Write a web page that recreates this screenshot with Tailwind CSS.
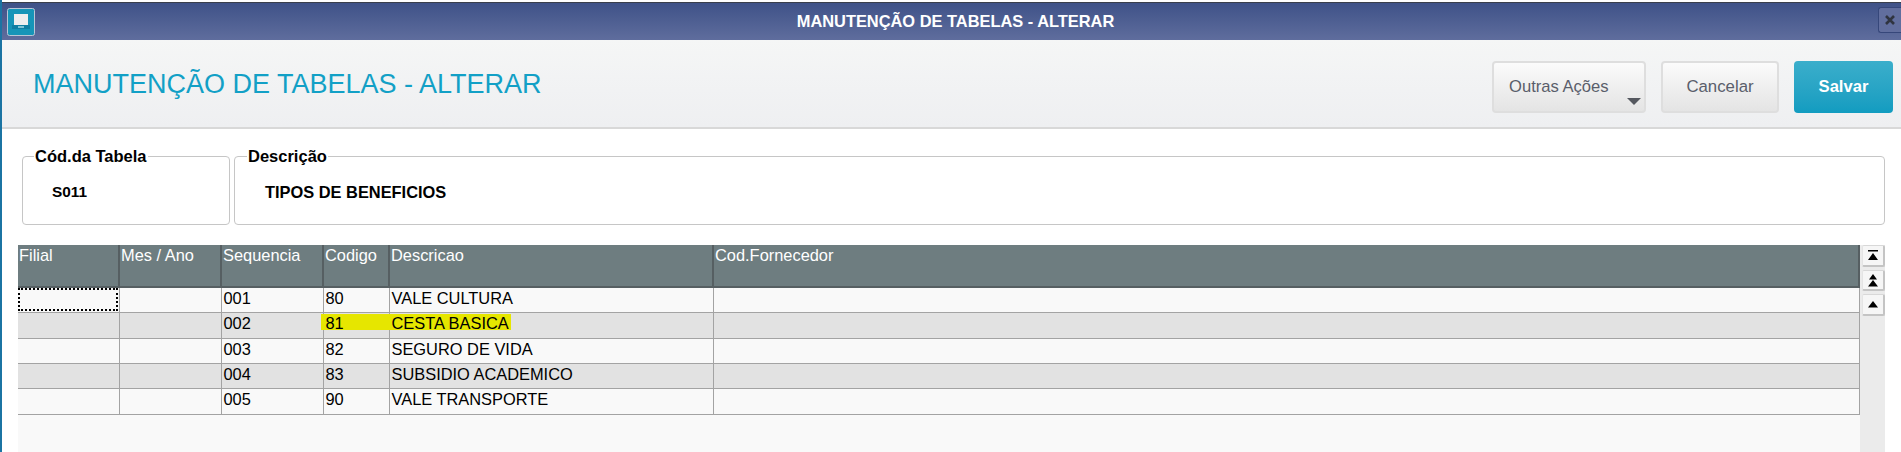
<!DOCTYPE html>
<html lang="pt-BR">
<head>
    <meta charset="UTF-8">
    <title>Manutenção de Tabelas - Alterar</title>
    <script src="https://cdn.jsdelivr.net/npm/@tailwindcss/browser@4"></script>
</head>
<body class="h-[452px] overflow-hidden bg-white font-['Liberation_Sans',Arial,sans-serif]">
<div class="h-[452px] flex flex-col border-l-[2px] border-[#1b74a3]">

    <!-- Title bar -->
    <div class="h-[40px] shrink-0 pt-[2px] bg-white">
        <div class="relative h-[38px] flex items-center justify-center border-t border-[#3a3f4c] bg-gradient-to-b from-[#3f5288] to-[#5f6d9d]">
            <svg class="absolute left-[5px] top-[5px]" width="28" height="28" viewBox="0 0 28 28">
                <rect x="0.5" y="0.5" width="27" height="27" rx="2" fill="#1695b8" stroke="#b9c6d6"/>
                <rect x="7" y="6" width="14" height="11" fill="#eeeeee"/>
                <rect x="5" y="17" width="18" height="4" fill="#0f7fa3"/>
                <rect x="11" y="18" width="6" height="2" fill="#7cc3d6"/>
            </svg>
            <span class="ml-[8px] text-[16.4px] font-bold text-white">MANUTENÇÃO DE TABELAS - ALTERAR</span>
            <div class="absolute right-0 top-[4px] w-[23px] h-[26px] flex items-center justify-center rounded-l-[3px] border border-r-0 border-[#36477a] bg-[#616e9e]">
                <svg width="10" height="10" viewBox="0 0 10 10"><path d="M1 1 L9 9 M9 1 L1 9" stroke="#2f3440" stroke-width="2.6"/></svg>
            </div>
        </div>
    </div>

    <!-- Page header -->
    <div class="h-[89px] shrink-0 flex items-start justify-between pl-[31px] pr-[8px] border-b-2 border-[#d8d8d8] bg-gradient-to-b from-[#f5f6f6] to-[#eeeff1]">
        <h1 class="mt-[29px] text-[27px] leading-[30px] text-[#12a0c6]">MANUTENÇÃO DE TABELAS - ALTERAR</h1>
        <div class="mt-[21px] flex gap-[15px]">
            <button class="relative w-[154px] h-[52px] pl-[15px] text-left text-[16.6px] text-[#5a5e6b] rounded-[4px] border-2 border-[#dedede] bg-gradient-to-b from-[#fbfbfb] to-[#e4e4e4]">
                Outras Ações
                <span class="absolute right-[3px] bottom-[6px] w-0 h-0 border-x-[7px] border-x-transparent border-t-[7px] border-t-[#55585f]"></span>
            </button>
            <button class="w-[118px] h-[52px] text-[16.8px] text-[#5a5e6b] rounded-[4px] border-2 border-[#dedede] bg-gradient-to-b from-[#fbfbfb] to-[#e4e4e4]">Cancelar</button>
            <button class="w-[99px] h-[52px] text-[16.6px] font-bold text-white rounded-[4px] bg-gradient-to-b from-[#3aaecb] to-[#119cc0]">Salvar</button>
        </div>
    </div>

    <!-- Fields -->
    <div class="shrink-0 flex gap-[4px] pl-[20px] pr-[16px] pt-[18px]">
        <fieldset class="w-[208px] h-[78px] pl-[29px] border border-[#c6c6c6] rounded-[4px]">
            <legend class="ml-[-18px] px-[1px] text-[16.5px] leading-[18px] font-bold text-black">Cód.da Tabela</legend>
            <p class="mt-[17px] text-[15.4px] leading-[20px] font-bold text-black">S011</p>
        </fieldset>
        <fieldset class="flex-1 h-[78px] pl-[30px] border border-[#c6c6c6] rounded-[4px]">
            <legend class="ml-[-18px] px-[1px] text-[16.5px] leading-[18px] font-bold text-black">Descrição</legend>
            <p class="mt-[17px] text-[16.4px] leading-[20px] font-bold text-black">TIPOS DE BENEFICIOS</p>
        </fieldset>
    </div>

    <!-- Grid -->
    <div class="flex-1 flex pl-[16px] pt-[20px] pr-[16px] min-h-0">
        <div class="w-[1842px] bg-[#f9f9f9]">
            <table class="w-full table-fixed border-collapse text-[16.4px] leading-[21px] text-black">
                <colgroup>
                    <col class="w-[101px]"><col class="w-[102px]"><col class="w-[102px]"><col class="w-[66px]"><col class="w-[324px]"><col>
                </colgroup>
                <thead>
                    <tr class="h-[42px] bg-[#6e7d80] text-left align-top text-[16.4px] leading-[20px] text-white">
                        <th class="pl-[1px] font-normal border-r-2 border-b-2 border-[#565f62]">Filial</th>
                        <th class="pl-[1px] font-normal border-r-2 border-b-2 border-[#565f62]">Mes / Ano</th>
                        <th class="pl-[1px] font-normal border-r-2 border-b-2 border-[#565f62]">Sequencia</th>
                        <th class="pl-[1px] font-normal border-r-2 border-b-2 border-[#565f62]">Codigo</th>
                        <th class="pl-[1px] font-normal border-r-2 border-b-2 border-[#565f62]">Descricao</th>
                        <th class="pl-[1px] font-normal border-r-2 border-b-2 border-[#565f62]">Cod.Fornecedor</th>
                    </tr>
                </thead>
                <tbody>
                    <tr class="h-[25px] align-top bg-[#f9f9f9]">
                        <td class="p-0 border-r border-b border-[#a3a3a3]"><div class="h-[23px] mr-[1px] border-2 border-dotted border-black"></div></td>
                        <td class="p-0 pl-[1px] border-r border-b border-[#a3a3a3]"></td>
                        <td class="p-0 pl-[2px] border-r border-b border-[#a3a3a3]">001</td>
                        <td class="p-0 pl-[2px] border-r border-b border-[#a3a3a3]">80</td>
                        <td class="p-0 pl-[2px] border-r border-b border-[#a3a3a3]">VALE CULTURA</td>
                        <td class="p-0 pl-[2px] border-r border-b border-[#a3a3a3]"></td>
                    </tr>
                    <tr class="h-[26px] align-top bg-[#e2e2e2]">
                        <td class="p-0 border-r border-b border-[#a3a3a3]"></td>
                        <td class="p-0 pl-[1px] border-r border-b border-[#a3a3a3]"></td>
                        <td class="p-0 pl-[2px] border-r border-b border-[#a3a3a3]">002</td>
                        <td class="relative p-0 pl-[2px] border-r border-b border-[#a3a3a3]">
                            <span class="absolute left-[-3px] top-[1px] w-[190px] h-[16px] bg-[#e6e600]"></span>
                            <span class="relative">81</span>
                        </td>
                        <td class="relative p-0 pl-[2px] border-r border-b border-[#a3a3a3]">CESTA BASICA</td>
                        <td class="p-0 pl-[2px] border-r border-b border-[#a3a3a3]"></td>
                    </tr>
                    <tr class="h-[25px] align-top bg-[#f9f9f9]">
                        <td class="p-0 border-r border-b border-[#a3a3a3]"></td>
                        <td class="p-0 pl-[1px] border-r border-b border-[#a3a3a3]"></td>
                        <td class="p-0 pl-[2px] border-r border-b border-[#a3a3a3]">003</td>
                        <td class="p-0 pl-[2px] border-r border-b border-[#a3a3a3]">82</td>
                        <td class="p-0 pl-[2px] border-r border-b border-[#a3a3a3]">SEGURO DE VIDA</td>
                        <td class="p-0 pl-[2px] border-r border-b border-[#a3a3a3]"></td>
                    </tr>
                    <tr class="h-[25px] align-top bg-[#e2e2e2]">
                        <td class="p-0 border-r border-b border-[#a3a3a3]"></td>
                        <td class="p-0 pl-[1px] border-r border-b border-[#a3a3a3]"></td>
                        <td class="p-0 pl-[2px] border-r border-b border-[#a3a3a3]">004</td>
                        <td class="p-0 pl-[2px] border-r border-b border-[#a3a3a3]">83</td>
                        <td class="p-0 pl-[2px] border-r border-b border-[#a3a3a3]">SUBSIDIO ACADEMICO</td>
                        <td class="p-0 pl-[2px] border-r border-b border-[#a3a3a3]"></td>
                    </tr>
                    <tr class="h-[26px] align-top bg-[#f9f9f9]">
                        <td class="p-0 border-r border-b border-[#a3a3a3]"></td>
                        <td class="p-0 pl-[1px] border-r border-b border-[#a3a3a3]"></td>
                        <td class="p-0 pl-[2px] border-r border-b border-[#a3a3a3]">005</td>
                        <td class="p-0 pl-[2px] border-r border-b border-[#a3a3a3]">90</td>
                        <td class="p-0 pl-[2px] border-r border-b border-[#a3a3a3]">VALE TRANSPORTE</td>
                        <td class="p-0 pl-[2px] border-r border-b border-[#a3a3a3]"></td>
                    </tr>
                </tbody>
            </table>
        </div>

        <!-- Scroll buttons -->
        <div class="w-[25px] pl-[2px] flex flex-col bg-[#ebebeb]">
            <div class="h-[22px] mb-[3px] flex items-center justify-center bg-[#f6f6f6] border-t border-l border-t-[#d8d8d8] border-l-[#e4e4e4] border-r-2 border-b-2 border-r-[#c4c4c4] border-b-[#c4c4c4] rounded-[2px]">
                <svg width="12" height="11" viewBox="0 0 12 11"><path d="M1 0H11V1.5H1Z M6 3L11 10H1Z" fill="#000"/></svg>
            </div>
            <div class="h-[21px] mb-[3px] flex items-center justify-center bg-[#f6f6f6] border-t border-l border-t-[#d8d8d8] border-l-[#e4e4e4] border-r-2 border-b-2 border-r-[#c4c4c4] border-b-[#c4c4c4] rounded-[2px]">
                <svg width="12" height="13" viewBox="0 0 12 13"><path d="M6 0L10 5.5H2Z M6 6L11 12.5H1Z" fill="#000"/></svg>
            </div>
            <div class="h-[22px] flex items-center justify-center bg-[#f6f6f6] border-t border-l border-t-[#d8d8d8] border-l-[#e4e4e4] border-r-2 border-b-2 border-r-[#c4c4c4] border-b-[#c4c4c4] rounded-[2px]">
                <svg width="12" height="7" viewBox="0 0 12 7"><path d="M6 0L11 6.5H1Z" fill="#000"/></svg>
            </div>
        </div>
    </div>
</div>
</body>
</html>
